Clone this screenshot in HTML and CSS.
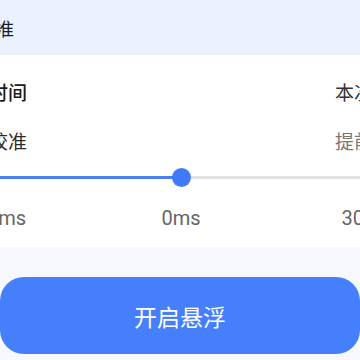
FILE: index.html
```html
<!DOCTYPE html>
<html lang="zh-CN">
<head>
    <meta charset="UTF-8">
    <meta name="viewport" content="width=device-width, initial-scale=1.0">
    <title>延迟校准</title>
    <link rel="stylesheet" href="styles.css">
</head>
<body>
    <div class="panel">
        <div class="header">延迟校准</div>

        <div class="card">
            <div class="row">
                <span class="row-title">同步时间</span>
                <span class="row-value">本次偏移</span>
            </div>
            <div class="row">
                <span class="row-label">手动校准</span>
                <span class="row-hint">提前显示</span>
            </div>

            <div class="slider">
                <div class="track">
                    <div class="track-fill" style="width: 50%"></div>
                    <div class="thumb" style="left: 50%"></div>
                </div>
            </div>
            <div class="scale">
                <span class="scale-min">-300ms</span>
                <span class="scale-mid">0ms</span>
                <span class="scale-max">300ms</span>
            </div>
        </div>
    </div>

    <div class="actions">
        <button class="float-btn">开启悬浮</button>
    </div>
</body>
</html>
```

FILE: styles.css
```css
html, body {
    margin: 0;
    padding: 0;
}
body {
    width: 360px;
    height: 360px;
    overflow: hidden;
    background: #f8f9fe;
    font-family: Roboto, "Noto Sans CJK SC", sans-serif;
    color: #222;
}
.panel {
    width: 480px;
    margin-left: -59px;
}
.header {
    height: 55px;
    display: flex;
    align-items: center;
    padding-left: 1px;
    background: #ebf1fe;
    font-size: 18px;
    color: #1a1a1a;
}
.card {
    background: #fff;
    padding: 22px 0 15px;
}
.row {
    display: flex;
    justify-content: space-between;
    align-items: center;
    padding: 0 10px;
    height: 28px;
    font-size: 19px;
}
.row + .row {
    margin-top: 21px;
}
.row-title {
    font-weight: 500;
    color: #1c1c1c;
}
.row-label {
    color: #2a2a2a;
}
.row-value {
    color: #333;
}
.row-hint {
    color: #777;
}
.slider {
    margin-top: 13px;
    height: 20px;
    display: flex;
    align-items: center;
    padding: 0 20px;
}
.track {
    position: relative;
    flex: 1;
    height: 3px;
    background: #e2e2e2;
    border-radius: 2px;
}
.track-fill {
    height: 100%;
    background: #4a7ff8;
    border-radius: 2px;
}
.thumb {
    position: absolute;
    top: 50%;
    width: 19px;
    height: 19px;
    margin: -9.5px 0 0 -9.5px;
    border-radius: 50%;
    background: #3f7bf9;
}
.scale {
    margin-top: 17px;
    display: grid;
    grid-template-columns: 1fr auto 1fr;
    align-items: center;
    padding: 0 18px;
    height: 28px;
    font-size: 20px;
    color: #666;
}
.scale-min {
    justify-self: start;
}
.scale-max {
    justify-self: end;
}
.actions {
    padding-top: 30px;
}
.float-btn {
    display: block;
    width: 360px;
    height: 77px;
    border: none;
    border-radius: 24px;
    background: #457ffb;
    color: #fff;
    font-family: "Noto Sans CJK SC", sans-serif;
    font-size: 23px;
    cursor: pointer;
}
```
